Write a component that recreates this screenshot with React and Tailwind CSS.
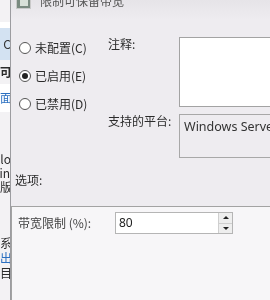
export default function App() {
  const font = { fontFamily: '"Noto Sans CJK SC", "Noto Sans", sans-serif' };
  const row = "flex items-center justify-end overflow-hidden leading-[12px]";
  return (
    <div className="w-[270px] h-[300px] flex overflow-hidden bg-[#eeecf0] text-[#2b2b2b] text-[12px] leading-none blur-[0.3px]" style={font}>
      {/* left background window peek */}
      <div className="w-[10px] shrink-0 flex flex-col overflow-hidden bg-[#f3f2f4] text-[12px]">
        <div className="h-[22px] shrink-0" />
        <div className="h-[6px] shrink-0 bg-white" />
        <div className={`h-[32px] shrink-0 bg-[#d3e2f2] text-[#333] ${row}`}>
          <span className="-mr-[1px]">C</span>
        </div>
        <div className={`h-[24px] shrink-0 font-bold ${row}`}>
          <span className="-mr-[2px]">可</span>
        </div>
        <div className={`h-[28px] shrink-0 bg-white text-[#2a6fc0] ${row}`}>
          <span className="-mr-[2px]">面</span>
        </div>
        <div className="h-[40px] shrink-0" />
        <div className={`h-[14px] shrink-0 ${row}`}><span className="-mr-[1px]">lo</span></div>
        <div className={`h-[14px] shrink-0 ${row}`}><span>in</span></div>
        <div className={`h-[14px] shrink-0 ${row}`}><span className="-mr-[2px]">版</span></div>
        <div className="h-[42px] shrink-0" />
        <div className={`h-[14px] shrink-0 ${row}`}><span className="-mr-[2px]">系</span></div>
        <div className={`h-[15px] shrink-0 text-[#2a6fc0] ${row}`}><span className="-mr-[2px]">出</span></div>
        <div className={`h-[15px] shrink-0 ${row}`}><span className="-mr-[2px]">目</span></div>
      </div>
      <div className="w-[1px] shrink-0 bg-[#9c9ca0]" />

      {/* dialog */}
      <div className="flex-1 flex flex-col min-w-0">
        {/* title bar */}
        <div className="h-[20px] flex items-start bg-gradient-to-b from-[#e6e4e8] to-[#eeecf0] overflow-hidden">
          <div className="ml-[5px] mt-[-4px] w-[15px] h-[13px] bg-[#7a8a80] border border-[#c9c9c9] flex items-center justify-center">
            <div className="w-[8px] h-[6px] bg-[#d8e0d8]" />
          </div>
          <span className="ml-[9px] mt-[-5px] text-[12px] text-[#555]">限制可保留带宽</span>
        </div>

        <div className="flex mt-[17px]">
          {/* radios */}
          <div className="w-[97px] flex flex-col pl-[8px] pt-[4px] gap-[15px] shrink-0">
            <div className="flex items-center gap-[4px] h-[13px]">
              <div className="w-[12px] h-[12px] rounded-full border border-[#555] bg-white" />
              <span>未配置(C)</span>
            </div>
            <div className="flex items-center gap-[4px] h-[13px]">
              <div className="w-[12px] h-[12px] rounded-full border border-[#555] bg-white flex items-center justify-center">
                <div className="w-[6px] h-[6px] rounded-full bg-[#222]" />
              </div>
              <span>已启用(E)</span>
            </div>
            <div className="flex items-center gap-[4px] h-[13px]">
              <div className="w-[12px] h-[12px] rounded-full border border-[#555] bg-white" />
              <span>已禁用(D)</span>
            </div>
          </div>

          {/* labels + boxes */}
          <div className="flex-1 flex flex-col min-w-0">
            <div className="flex">
              <div className="w-[71px] shrink-0 pt-[1px]">注释:</div>
              <div className="flex-1 h-[70px] bg-white border border-[#a3a3a3] border-r-0" />
            </div>
            <div className="flex mt-[7px]">
              <div className="w-[71px] shrink-0 pt-[1px]">支持的平台:</div>
              <div className="flex-1 h-[44px] border border-[#a8a8a8] border-r-0 pl-[4px] pt-[6px] whitespace-nowrap overflow-hidden text-[12.5px] text-[#333]" style={{ fontFamily: '"Noto Sans", sans-serif' }}>
                Windows Server 2003
              </div>
            </div>
          </div>
        </div>

        <div className="pl-[4px] mt-[16px]">选项:</div>

        {/* options panel */}
        <div className="mt-[20px] flex-1 border-t border-l border-[#a3a3a3] bg-[#f7f6f8] pl-[6px] pt-[5px]">
          <div className="flex items-center">
            <div className="w-[97px] shrink-0 text-[#444]">带宽限制 (%):</div>
            <div className="w-[118px] h-[22px] bg-white border border-[#b5b5b5] flex items-center">
              <span className="flex-1 pl-[3px] text-[#222]" style={{ fontFamily: '"Noto Sans", sans-serif' }}>80</span>
              <div className="w-[14px] h-[20px] flex flex-col border-l border-[#cfcfcf]">
                <div className="flex-1 flex items-center justify-center border-b border-[#cfcfcf] bg-[#eeeeee]">
                  <div className="w-0 h-0 border-l-[3px] border-r-[3px] border-b-[3px] border-l-transparent border-r-transparent border-b-[#222]" />
                </div>
                <div className="flex-1 flex items-center justify-center bg-[#eeeeee]">
                  <div className="w-0 h-0 border-l-[3px] border-r-[3px] border-t-[3px] border-l-transparent border-r-transparent border-t-[#222]" />
                </div>
              </div>
            </div>
          </div>
        </div>
      </div>
    </div>
  );
}
